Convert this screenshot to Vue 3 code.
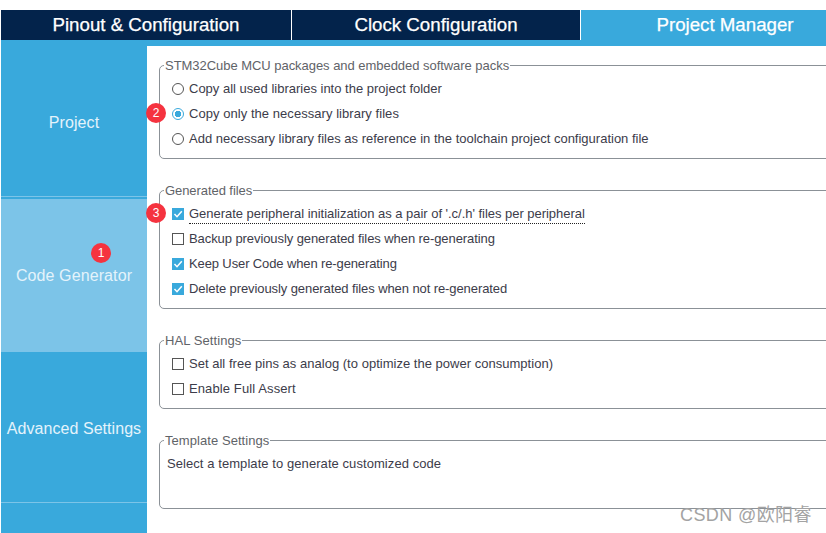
<template>
  <div class="page">
    <div class="tabs">
      <div v-for="tab in tabs" :key="tab.name" class="tab" :class="{ active: tab.active }" :style="{ width: tab.width + 'px' }">{{ tab.name }}</div>
    </div>
    <div class="strip"></div>
    <div class="body">
      <div class="side">
        <div class="side-item first">Project</div>
        <div class="side-item current">
          Code Generator
          <span class="badge badge-side">1</span>
        </div>
        <div class="side-item adv">Advanced Settings</div>
        <div class="side-rest"></div>
      </div>
      <div class="main">
        <fieldset class="group g1">
          <legend :style="{ letterSpacing: '-0.04px' }">STM32Cube MCU packages and embedded software packs</legend>
          <div v-for="(r, i) in packs" :key="i" class="row">
            <span class="radio" :class="{ on: r.on }"></span>
            <span :style="{ letterSpacing: r.ls + 'px' }">{{ r.text }}</span>
            <span v-if="r.badge" class="badge badge-row">{{ r.badge }}</span>
          </div>
        </fieldset>
        <fieldset class="group g2">
          <legend :style="{ letterSpacing: '-0.07px' }">Generated files</legend>
          <div v-for="(r, i) in generated" :key="i" class="row">
            <span class="check" :class="{ on: r.on }">
              <svg v-if="r.on" width="12" height="12" viewBox="0 0 12 12"><path d="M2.5 6.1 5 8.7 9.8 3.2" fill="none" stroke="#fff" stroke-width="1.5" /></svg>
            </span>
            <span :class="{ dotted: r.dotted }" :style="{ letterSpacing: r.ls + 'px' }">{{ r.text }}</span>
            <span v-if="r.badge" class="badge badge-row">{{ r.badge }}</span>
          </div>
        </fieldset>
        <fieldset class="group g3">
          <legend :style="{ letterSpacing: '0.08px' }">HAL Settings</legend>
          <div v-for="(r, i) in hal" :key="i" class="row">
            <span class="check"></span>
            <span :style="{ letterSpacing: r.ls + 'px' }">{{ r.text }}</span>
          </div>
        </fieldset>
        <fieldset class="group g3">
          <legend :style="{ letterSpacing: '0.06px' }">Template Settings</legend>
          <div class="row plain">Select a template to generate customized code</div>
        </fieldset>
      </div>
    </div>
    <div class="mark">CSDN @欧阳睿</div>
  </div>
</template>

<script setup>
const tabs = [
  { name: 'Pinout & Configuration', width: 291 },
  { name: 'Clock Configuration', width: 289 },
  { name: 'Project Manager', width: 245, active: true }
]

// ls: small per-line tracking, the original's hinted widths differ line by line
const packs = [
  { text: 'Copy all used libraries into the project folder', ls: 0 },
  { text: 'Copy only the necessary library files', on: true, badge: 2, ls: 0.05 },
  { text: 'Add necessary library files as reference in the toolchain project configuration file', ls: 0 }
]

const generated = [
  { text: "Generate peripheral initialization as a pair of '.c/.h' files per peripheral", on: true, dotted: true, badge: 3, ls: -0.03 },
  { text: 'Backup previously generated files when re-generating', ls: -0.08 },
  { text: 'Keep User Code when re-generating', on: true, ls: -0.12 },
  { text: 'Delete previously generated files when not re-generated', on: true, ls: -0.09 }
]

const hal = [
  { text: 'Set all free pins as analog (to optimize the power consumption)', ls: 0.02 },
  { text: 'Enable Full Assert', ls: 0.11 }
]
</script>

<style>
html, body {
  margin: 0;
  background: #fff;
  overflow: hidden;
}
</style>

<style scoped>
.page {
  position: relative;
  width: 826px;
  height: 533px;
  box-sizing: border-box;
  padding: 10px 0 0 1px;
  overflow: hidden;
  font-family: "Liberation Sans", Arial, sans-serif;
  display: flex;
  flex-direction: column;
}

.tabs {
  display: flex;
  height: 30px;
  flex: none;
}

.tab {
  box-sizing: border-box;
  flex: none;
  background: #03234b;
  border-right: 1px solid #fff;
  color: #fff;
  font-size: 18.7px;
  font-weight: 500;
  line-height: 30px;
  text-align: center;
  -webkit-text-stroke: 0.25px #fff;
}

.tab.active {
  background: #39a9dc;
  border-right: none;
  padding-left: 43px;
}

.strip {
  height: 6px;
  flex: none;
  background: #39a9dc;
}

.body {
  display: flex;
  flex: 1;
  min-height: 0;
}

.side {
  width: 146px;
  flex: none;
  display: flex;
  flex-direction: column;
  background: #39a9dc;
  color: #e4f3fb;
  font-size: 16px;
  letter-spacing: 0.1px;
}

.side-item {
  position: relative;
  display: flex;
  align-items: center;
  justify-content: center;
  white-space: nowrap;
}

.first {
  height: 151px;
  padding-top: 4px;
  box-sizing: border-box;
  border-bottom: 1px solid #7cc4e8;
}

.current {
  height: 153px;
  margin-top: 2px;
  background: #7cc4e8;
}

.adv {
  height: 151px;
  box-sizing: border-box;
  padding-top: 4px;
  border-bottom: 1px solid #7cc4e8;
  letter-spacing: 0.05px;
}

.side-rest {
  flex: 1;
}

.main {
  flex: 1;
  min-width: 0;
  display: flex;
  flex-direction: column;
  gap: 24px;
  padding: 12px 0 0 12px;
}

.group {
  box-sizing: border-box;
  margin: 0 -10px 0 0;
  padding: 4px 0 0 12px;
  border: 1px solid #8b9197;
  border-radius: 5px;
  color: #3c3c4a;
  font-size: 13px;
  min-width: 0;
}

.group legend {
  padding: 1px 1px 0;
  margin-left: -8px;
  color: #5f6368;
  font-size: 13px;
  line-height: 13px;
}

.g1 { height: 101px; }
.g2 { height: 126px; }
.g3 { height: 76px; }

.row {
  position: relative;
  display: flex;
  align-items: center;
  gap: 5px;
  height: 25px;
  white-space: nowrap;
}

.plain {
  margin-left: -5px;
  letter-spacing: 0.07px;
}

.radio {
  box-sizing: border-box;
  width: 12px;
  height: 12px;
  flex: none;
  border: 1px solid #555;
  border-radius: 50%;
  background: #fff;
}

.radio.on {
  border-color: #39a9dc;
  background: radial-gradient(circle, #39a9dc 0 3px, #fff 3.5px);
}

.check {
  box-sizing: border-box;
  width: 12px;
  height: 12px;
  flex: none;
  border: 1px solid #555;
  background: #fff;
  display: block;
}

.check.on {
  border: none;
  background: #39a9dc;
}

.check svg {
  display: block;
}

.dotted {
  border-bottom: 1px dotted #222;
  line-height: 19px;
}

.badge {
  position: absolute;
  width: 20px;
  height: 20px;
  border-radius: 50%;
  background: #f5333f;
  color: #fff;
  font-size: 12px;
  letter-spacing: 0;
  line-height: 20px;
  text-align: center;
}

.badge-side {
  left: 90px;
  top: 44px;
}

.badge-row {
  left: -26px;
  top: 2px;
}

.mark {
  position: absolute;
  left: 680px;
  top: 504px;
  color: #a3a3a3;
  font-family: "Liberation Sans", "Noto Sans CJK SC", sans-serif;
  font-size: 18px;
  letter-spacing: 0.4px;
  line-height: 22px;
  white-space: nowrap;
}
</style>
